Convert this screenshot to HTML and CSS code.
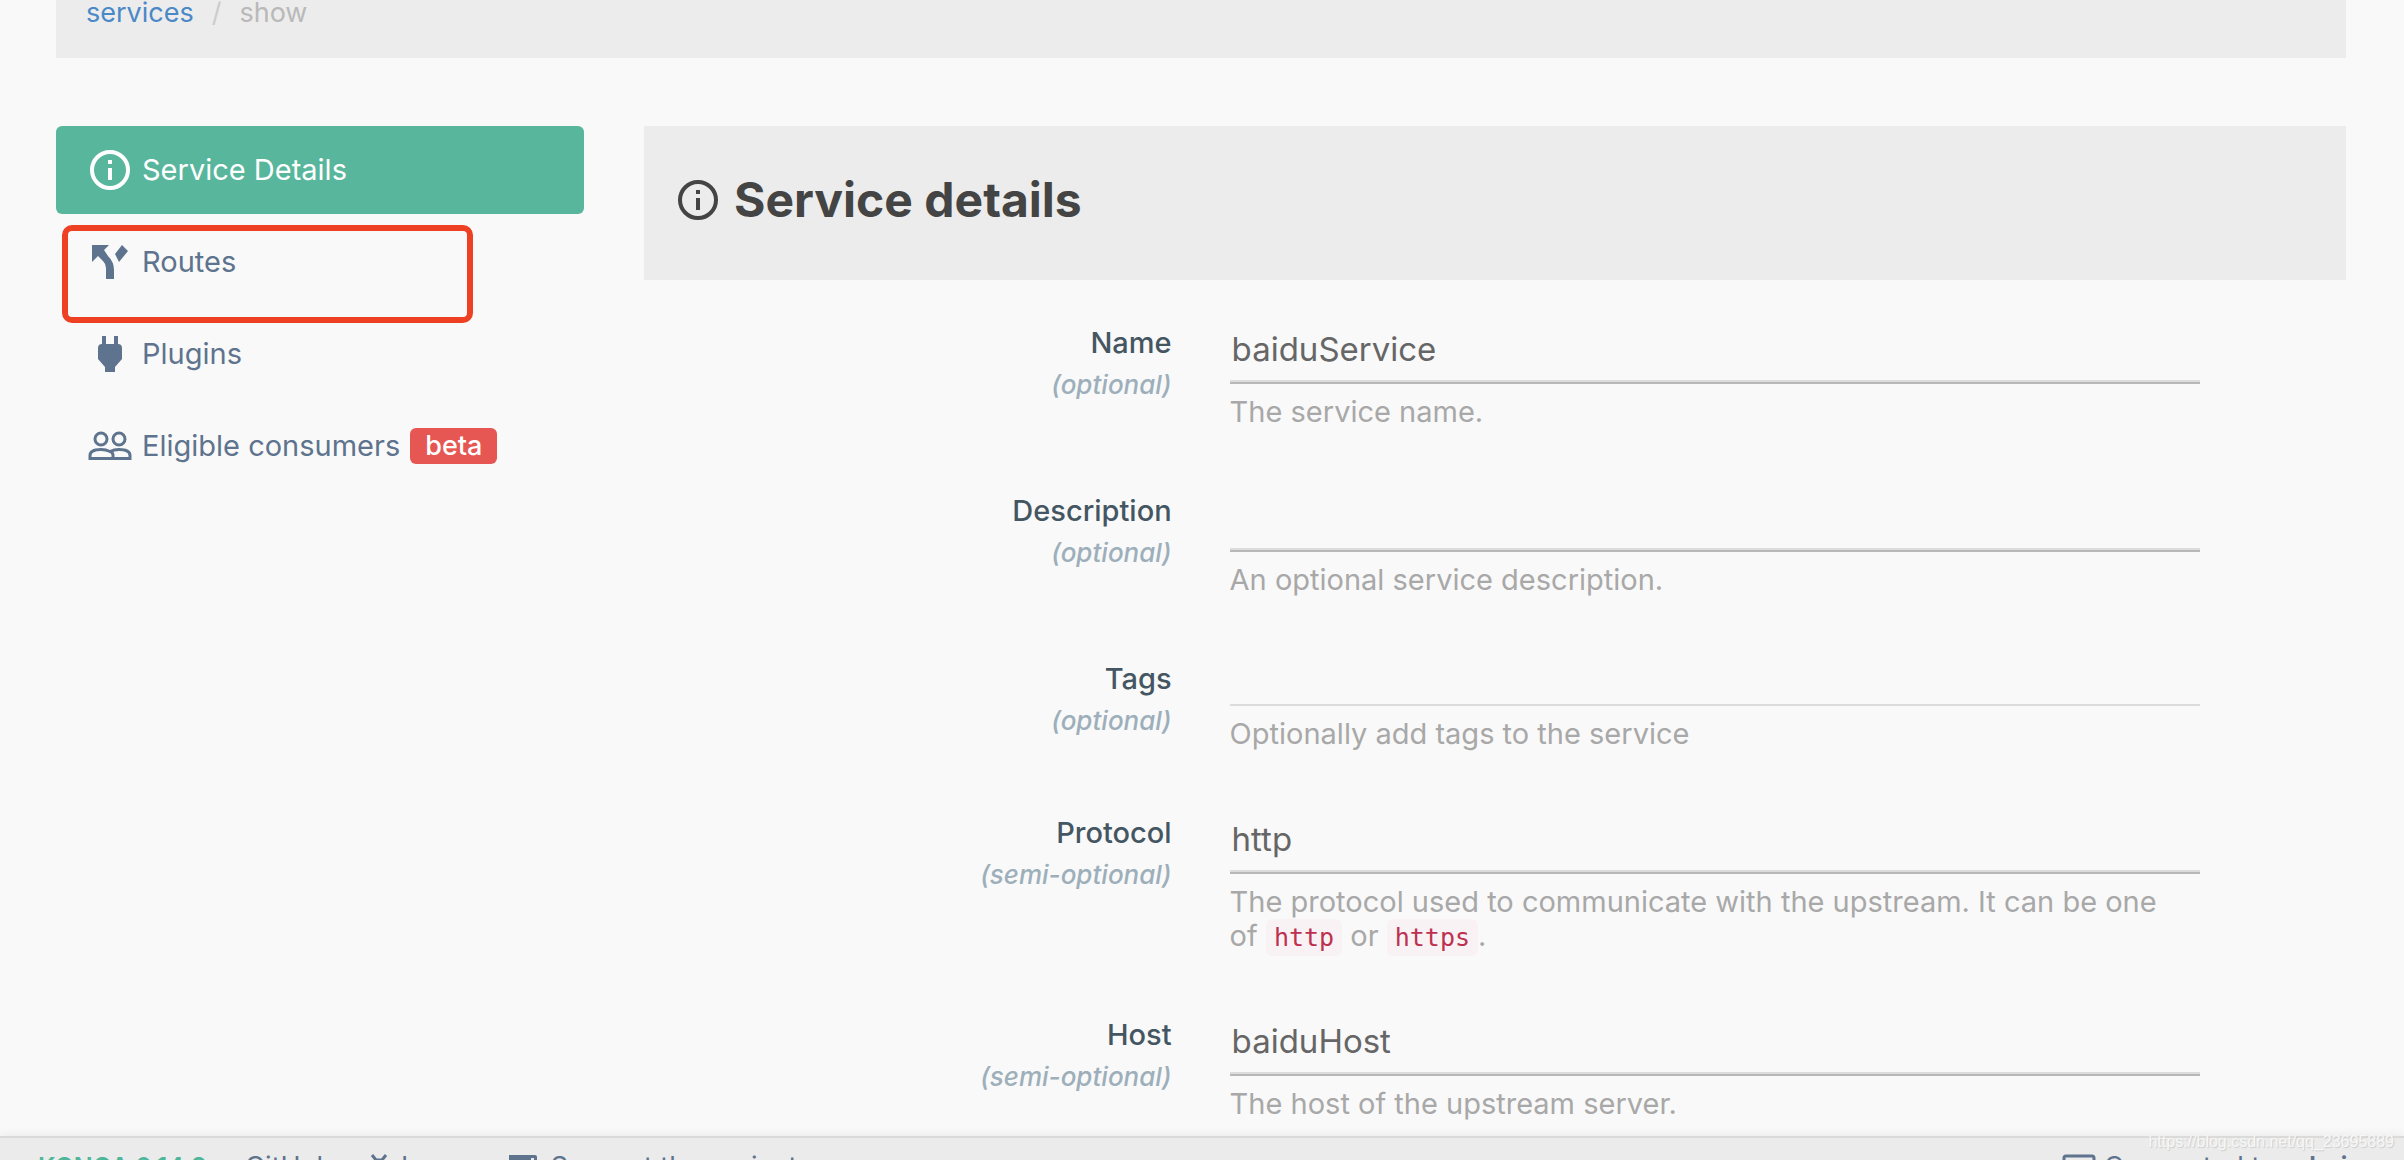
FILE: index.html
```html
<!DOCTYPE html>
<html lang="en">
<head>
<meta charset="utf-8">
<title>Konga - Service details</title>
<link rel="stylesheet" href="styles.css">
</head>
<body>
<div class="app">
  <div class="page">
    <nav class="breadcrumb" aria-label="Breadcrumb">
      <a href="#services">services</a><span class="divider">/</span><span>show</span>
    </nav>
    <div class="columns">
      <nav class="side" aria-label="Service sections">
        <a class="side-link active" href="#details">
          <svg class="side-icon" viewBox="0 0 44 44" fill="none" stroke="currentColor" stroke-width="4"><circle cx="22" cy="22" r="18"/><path d="M22 20v12M22 12v4"/></svg>
          Service Details</a>
        <a class="side-link marked" href="#routes">
          <svg class="side-icon" viewBox="0 0 44 44" fill="currentColor"><path d="M4 5h17l-5 5 4 6q6 6 6 14v9h-8V28q0-4-3-7l-5-5-6 6zM34 5l6 6-9 11-4-8z"/></svg>
          Routes</a>
        <a class="side-link" href="#plugins">
          <svg class="side-icon" viewBox="0 0 44 44" fill="currentColor"><path d="M14 4h4v8h8V4h4v8q4 0 4 4v11l-7 8v5H17v-5l-7-8V16q0-4 4-4z"/></svg>
          Plugins</a>
        <a class="side-link" href="#consumers">
          <svg class="side-icon" viewBox="0 0 44 44" fill="none" stroke="currentColor" stroke-width="3"><circle cx="13" cy="15" r="6"/><circle cx="31" cy="15" r="6"/><path d="M2 34.500v-3q0-6 11-6 5 0 9 2 4-2 9-2 11 0 11 6v3zM22 27q3 2 3 4v3"/></svg>
          Eligible consumers <span class="badge">beta</span></a>
      </nav>
      <main class="main">
        <header class="main-head">
          <svg class="head-icon" viewBox="0 0 44 44" fill="none" stroke="currentColor" stroke-width="4"><circle cx="22" cy="22" r="18"/><path d="M22 20v12M22 12v4"/></svg>
          <h1>Service details</h1>
        </header>
        <form class="form">
          <div class="row">
            <label for="name">Name <em>(optional)</em></label>
            <div class="field"><input id="name" type="text" value="baiduService"><p>The service name.</p></div>
          </div>
          <div class="row">
            <label for="description">Description <em>(optional)</em></label>
            <div class="field"><input id="description" type="text"><p>An optional service description.</p></div>
          </div>
          <div class="row">
            <label for="tags">Tags <em>(optional)</em></label>
            <div class="field"><input id="tags" class="tags" type="text"><p>Optionally add tags to the service</p></div>
          </div>
          <div class="row">
            <label for="protocol">Protocol <em>(semi-optional)</em></label>
            <div class="field"><input id="protocol" type="text" value="http"><p>The protocol used to communicate with the upstream. It can be one of <code>http</code> or <code>https</code>.</p></div>
          </div>
          <div class="row">
            <label for="host">Host <em>(semi-optional)</em></label>
            <div class="field"><input id="host" type="text" value="baiduHost"><p>The host of the upstream server.</p></div>
          </div>
        </form>
      </main>
    </div>
  </div>
  <footer class="footer">
    <strong class="brand">KONGA 0.14.9</strong>
    <a href="#github">GitHub</a>
    <a href="#issues"><svg class="foot-icon" viewBox="0 0 34 28" fill="none" stroke="currentColor" stroke-width="3"><path d="M13 1l4 5h6l4-5M14 10h12v14H14z"/></svg>Issues</a>
    <a href="#support"><svg class="foot-icon" viewBox="0 0 34 28"><path fill="currentColor" d="M0 1h26q2 0 2 2v10q0 2-2 2h-4v9H0z"/><path fill="#ebebeb" d="M22 4h3v8h-3z"/></svg>Support the project</a>
    <span class="connection"><svg class="foot-icon" viewBox="0 0 34 28" fill="none" stroke="currentColor" stroke-width="3"><rect x="2" y="2" width="30" height="22" rx="2"/></svg><span>Connected to <b>admin</b></span></span>
  </footer>
  <span class="watermark">https://blog.csdn.net/qq_23695889</span>
</div>
</body>
</html>
```
FILE: styles.css
```css
* { box-sizing: border-box; }
body {
  margin: 0;
  background: #f9f9f9;
  color: #444;
  font: 400 29px/34px Inter, "Open Sans", sans-serif;
}
a { color: inherit; text-decoration: none; }
svg { flex: none; }
.app { display: flex; flex-direction: column; height: 100vh; overflow: hidden; position: relative; }
.page { flex: 1; min-height: 0; overflow: hidden; padding: 0 58px 0 56px; }
.breadcrumb {
  display: flex;
  align-items: center;
  gap: 18px;
  height: 90px;
  margin-top: -32px;
  padding: 0 30px;
  background: #ececec;
  color: #b9b9b9;
  font-size: 27px;
}
.breadcrumb a { color: #4a88c7; }
.divider { color: #ccc; }
.columns { display: grid; grid-template-columns: 528px 1fr; gap: 60px; padding-top: 68px; }
.side { display: flex; flex-direction: column; gap: 4px; color: #5e738d; }
.side-link { display: flex; align-items: center; gap: 10px; height: 88px; padding: 0 32px; border-radius: 6px; position: relative; white-space: nowrap; }
.side-link.active { background: #57b69c; color: #fff; }
.side-icon { width: 44px; height: 44px; }
.marked::after {
  content: "";
  position: absolute;
  inset: 7px 111px -17px 6px;
  border: 6px solid #ee4023;
  border-radius: 10px;
}
.badge { padding: 1px 15px; border-radius: 6px; background: #e65653; color: #fff; font-size: 27px; font-weight: 500; }
.main-head { display: flex; align-items: center; gap: 14px; height: 154px; padding: 0 32px 6px; background: #ececec; }
.main-head h1 { margin: 0; font-size: 48px; font-weight: 700; line-height: 56px; }
.head-icon { width: 44px; height: 44px; }
.form { padding-top: 36px; }
.row { display: grid; grid-template-columns: 31% 57%; column-gap: 58px; margin-bottom: 55px; }
label { padding-top: 6px; height: 90px; line-height: 42px; text-align: right; color: #455663; font-weight: 500; }
label em { display: block; color: #9dafba; font-size: 26px; }
input {
  display: block;
  width: 100%;
  height: 68px;
  padding: 0 2px;
  border: 0;
  border-bottom: 2px solid #b8b8b8;
  box-shadow: inset 0 -2px #dcdcdc;
  background: transparent;
  color: #666;
  font: inherit;
  font-size: 33px;
}
input.tags { height: 54px; border-color: #dcdcdc; box-shadow: none; }
.field p { margin: 11px 0 0; padding-right: 20px; color: #a8a8a8; }
code { padding: 4px 8px; border-radius: 6px; background: #f9f2f4; color: #bd3050; font: 400 25px "DejaVu Sans Mono", monospace; }
.footer {
  display: flex;
  align-items: flex-start;
  gap: 26px;
  height: 24px;
  padding: 12px 40px 0 38px;
  overflow: hidden;
  border-top: 2px solid #dadada;
  background: #ebebeb;
  box-shadow: 0 -2px 8px rgba(0, 0, 0, .06);
  color: #5e738d;
  font-size: 27px;
}
.footer a, .connection { display: flex; gap: 8px; white-space: nowrap; }
.brand { margin-right: 12px; color: #50b69a; font-size: 25px; font-weight: 600; }
.connection { margin-left: auto; }
.connection b { font-weight: 600; }
.foot-icon { width: 34px; height: 28px; margin-top: 4px; }
.watermark {
  position: absolute;
  right: 10px;
  bottom: 8px;
  color: #f7f7f7;
  font: 16px/20px "Liberation Sans", sans-serif;
  text-shadow: 1px 1px 1px #ccc;
}
```
